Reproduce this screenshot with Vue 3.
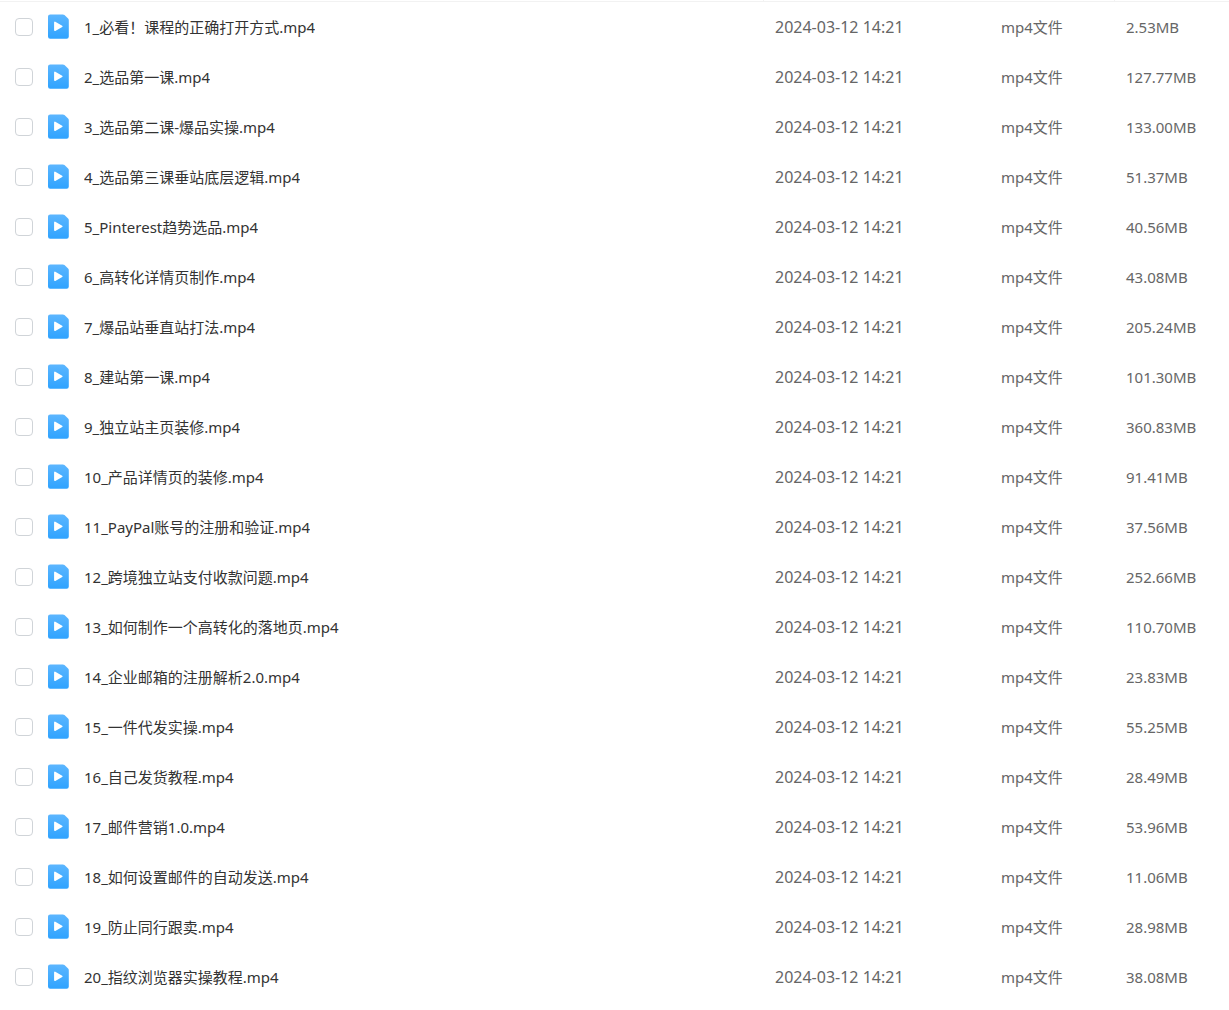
<script setup>
import { ref } from 'vue'

const modified = '2024-03-12 14:21'
const files = [
  ['1_必看！课程的正确打开方式.mp4', '2.53MB'],
  ['2_选品第一课.mp4', '127.77MB'],
  ['3_选品第二课-爆品实操.mp4', '133.00MB'],
  ['4_选品第三课垂站底层逻辑.mp4', '51.37MB'],
  ['5_Pinterest趋势选品.mp4', '40.56MB'],
  ['6_高转化详情页制作.mp4', '43.08MB'],
  ['7_爆品站垂直站打法.mp4', '205.24MB'],
  ['8_建站第一课.mp4', '101.30MB'],
  ['9_独立站主页装修.mp4', '360.83MB'],
  ['10_产品详情页的装修.mp4', '91.41MB'],
  ['11_PayPal账号的注册和验证.mp4', '37.56MB'],
  ['12_跨境独立站支付收款问题.mp4', '252.66MB'],
  ['13_如何制作一个高转化的落地页.mp4', '110.70MB'],
  ['14_企业邮箱的注册解析2.0.mp4', '23.83MB'],
  ['15_一件代发实操.mp4', '55.25MB'],
  ['16_自己发货教程.mp4', '28.49MB'],
  ['17_邮件营销1.0.mp4', '53.96MB'],
  ['18_如何设置邮件的自动发送.mp4', '11.06MB'],
  ['19_防止同行跟卖.mp4', '28.98MB'],
  ['20_指纹浏览器实操教程.mp4', '38.08MB'],
].map(([name, size], i) => ({ id: `file-${i + 1}`, name, size }))

const selected = ref([])
</script>

<template>
  <svg class="defs" aria-hidden="true">
    <defs>
      <linearGradient id="video-fill" x1="0" y1="0" x2="0" y2="1">
        <stop offset="0" stop-color="#5cb6ff" />
        <stop offset="1" stop-color="#2fa3ff" />
      </linearGradient>
    </defs>
  </svg>
  <table class="files">
    <colgroup>
      <col />
      <col class="col-date" />
      <col class="col-type" />
      <col class="col-size" />
    </colgroup>
    <thead aria-hidden="true">
      <tr>
        <th class="divided"></th>
        <th></th>
        <th class="divided"></th>
        <th></th>
      </tr>
    </thead>
    <tbody>
      <tr v-for="file in files" :key="file.id">
        <td>
          <div class="entry">
            <input :id="file.id" v-model="selected" class="check" type="checkbox" :value="file.id" />
            <svg class="icon" viewBox="0 0 22 26" aria-hidden="true">
              <path
                d="M2.2 .4h12.6c.7 0 1.200 .2 1.700 .7l3.600 3.400c.5 .5 .7 1 .7 1.700v16.400a2.200 2.200 0 0 1-2.200 2.200H2.200A2.200 2.200 0 0 1 0 22.600v-20A2.200 2.200 0 0 1 2.200 .4z"
                fill="url(#video-fill)"
              />
              <path
                d="M6.900 8.400v7.900l6.900-3.950z"
                fill="#fff"
                stroke="#fff"
                stroke-width="1.600"
                stroke-linejoin="round"
              />
            </svg>
            <label class="name" :for="file.id">{{ file.name }}</label>
          </div>
        </td>
        <td class="meta date">{{ modified }}</td>
        <td class="meta">mp4文件</td>
        <td class="meta">{{ file.size }}</td>
      </tr>
    </tbody>
  </table>
</template>

<style>
body {
  margin: 0;
  background: #fff;
}
</style>

<style scoped>
.defs {
  position: absolute;
  width: 0;
  height: 0;
}

.files {
  width: 100%;
  table-layout: fixed;
  border-collapse: separate;
  border-spacing: 0;
  font-family: "Noto Sans", "Noto Sans CJK SC", sans-serif;
  font-size: 15px;
  line-height: 24px;
  color: #333;
}

.col-date {
  width: 226px;
}

.col-type {
  width: 125px;
}

.col-size {
  width: 114px;
}

th {
  height: 1px;
  padding: 0;
  border-bottom: 1px solid #f2f2f2;
}

th.divided {
  border-right: 1px solid #f2f2f2;
}

td {
  height: 50px;
  padding: 0;
  vertical-align: middle;
  white-space: nowrap;
}

.entry {
  display: flex;
  align-items: center;
  padding-left: 15px;
}

.check {
  appearance: none;
  box-sizing: border-box;
  flex: none;
  width: 18px;
  height: 18px;
  margin: 0;
  border: 1px solid #d0d4d8;
  border-radius: 4px;
  background: #fff;
}

.check:checked {
  border-color: #2fa3ff;
  background: #2fa3ff;
}

.icon {
  flex: none;
  width: 22px;
  height: 26px;
  margin: 0 14px 0 15px;
}

.name {
  overflow: hidden;
  text-overflow: ellipsis;
}

.meta {
  padding-left: 11px;
  color: #666;
}

.date {
  font-size: 16px;
}
</style>
